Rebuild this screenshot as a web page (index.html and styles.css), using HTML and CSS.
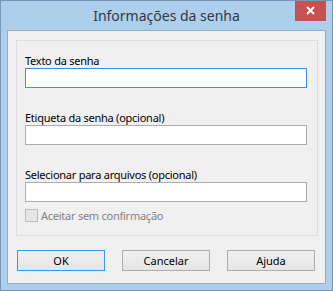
FILE: index.html
```html
<!DOCTYPE html>
<html lang="pt">
<head>
    <meta charset="UTF-8">
    <title>Informações da senha</title>
    <link rel="stylesheet" href="styles.css">
</head>
<body>
    <div class="window">
        <div class="titlebar">
            <span class="title">Informações da senha</span>
            <svg class="close-btn" width="31" height="20" viewBox="0 0 31 20">
                <rect width="31" height="20" fill="#c75050"/>
                <path d="M12 6L19 13M19 6L12 13" stroke="#ffffff" stroke-width="2"/>
            </svg>
        </div>

        <div class="client">
            <!-- Password fields -->
            <div class="group">
                <div class="field">
                    <label>Texto da senha</label>
                    <input type="text" class="text-input focused">
                </div>
                <div class="field">
                    <label>Etiqueta da senha (opcional)</label>
                    <input type="text" class="text-input">
                </div>
                <div class="field">
                    <label>Selecionar para arquivos (opcional)</label>
                    <input type="text" class="text-input">
                </div>
                <div class="check-row">
                    <span class="checkbox"></span>
                    <span class="check-label">Aceitar sem confirmação</span>
                </div>
            </div>

            <!-- Dialog buttons -->
            <div class="buttons">
                <button class="btn default">OK</button>
                <button class="btn">Cancelar</button>
                <button class="btn">Ajuda</button>
            </div>
        </div>
    </div>
</body>
</html>
```

FILE: styles.css
```css
* {
    margin: 0;
    padding: 0;
    box-sizing: border-box;
    font-family: 'Noto Sans', 'Open Sans', sans-serif;
}

body {
    background-color: #ffffff;
}

/* Window frame */
.window {
    width: 333px;
    height: 291px;
    background-color: #aecfec;
    border: 1px solid #7796b8;
}

.titlebar {
    height: 29px;
    display: flex;
    align-items: flex-start;
    padding-left: 37px;
}

.title {
    flex: 1;
    text-align: center;
    font-size: 14px;
    line-height: 29px;
    color: #2e3a46;
    white-space: nowrap;
}

.close-btn {
    display: block;
    flex: none;
    margin-right: 6px;
}

/* Client area */
.client {
    height: 254px;
    margin: 0 6px;
    background-color: #f0f0f0;
    border: 1px solid #8fafcf;
    padding: 9px 0 0 8px;
}

.group {
    width: 302px;
    height: 196px;
    border: 1px solid #dcdcdc;
    padding: 12px 0 0 8px;
}

.field {
    display: flex;
    flex-direction: column;
}

.field + .field {
    margin-top: 22px;
}

.field label {
    height: 15px;
    font-size: 11px;
    line-height: 15px;
    letter-spacing: -0.25px;
    color: #000;
}

.text-input {
    width: 282px;
    height: 20px;
    border: 1px solid #abadb3;
    background-color: #fff;
    outline: none;
}

.text-input.focused {
    border-color: #3d8ee0;
}

.check-row {
    display: flex;
    align-items: center;
    gap: 3px;
    margin-top: 7px;
    height: 13px;
}

.checkbox {
    width: 13px;
    height: 13px;
    border: 1px solid #bcbcbc;
    background-color: #e6e6e6;
}

.check-label {
    font-size: 11px;
    line-height: 15px;
    letter-spacing: -0.25px;
    color: #838383;
}

/* Buttons */
.buttons {
    display: flex;
    gap: 17px;
    margin-top: 14px;
    padding-left: 1px;
}

.btn {
    width: 88px;
    height: 21px;
    font-size: 11px;
    color: #000;
    border: 1px solid #adadad;
    background: linear-gradient(#f0f0f0, #e5e5e5);
}

.btn.default {
    border-color: #3399ff;
}
```
